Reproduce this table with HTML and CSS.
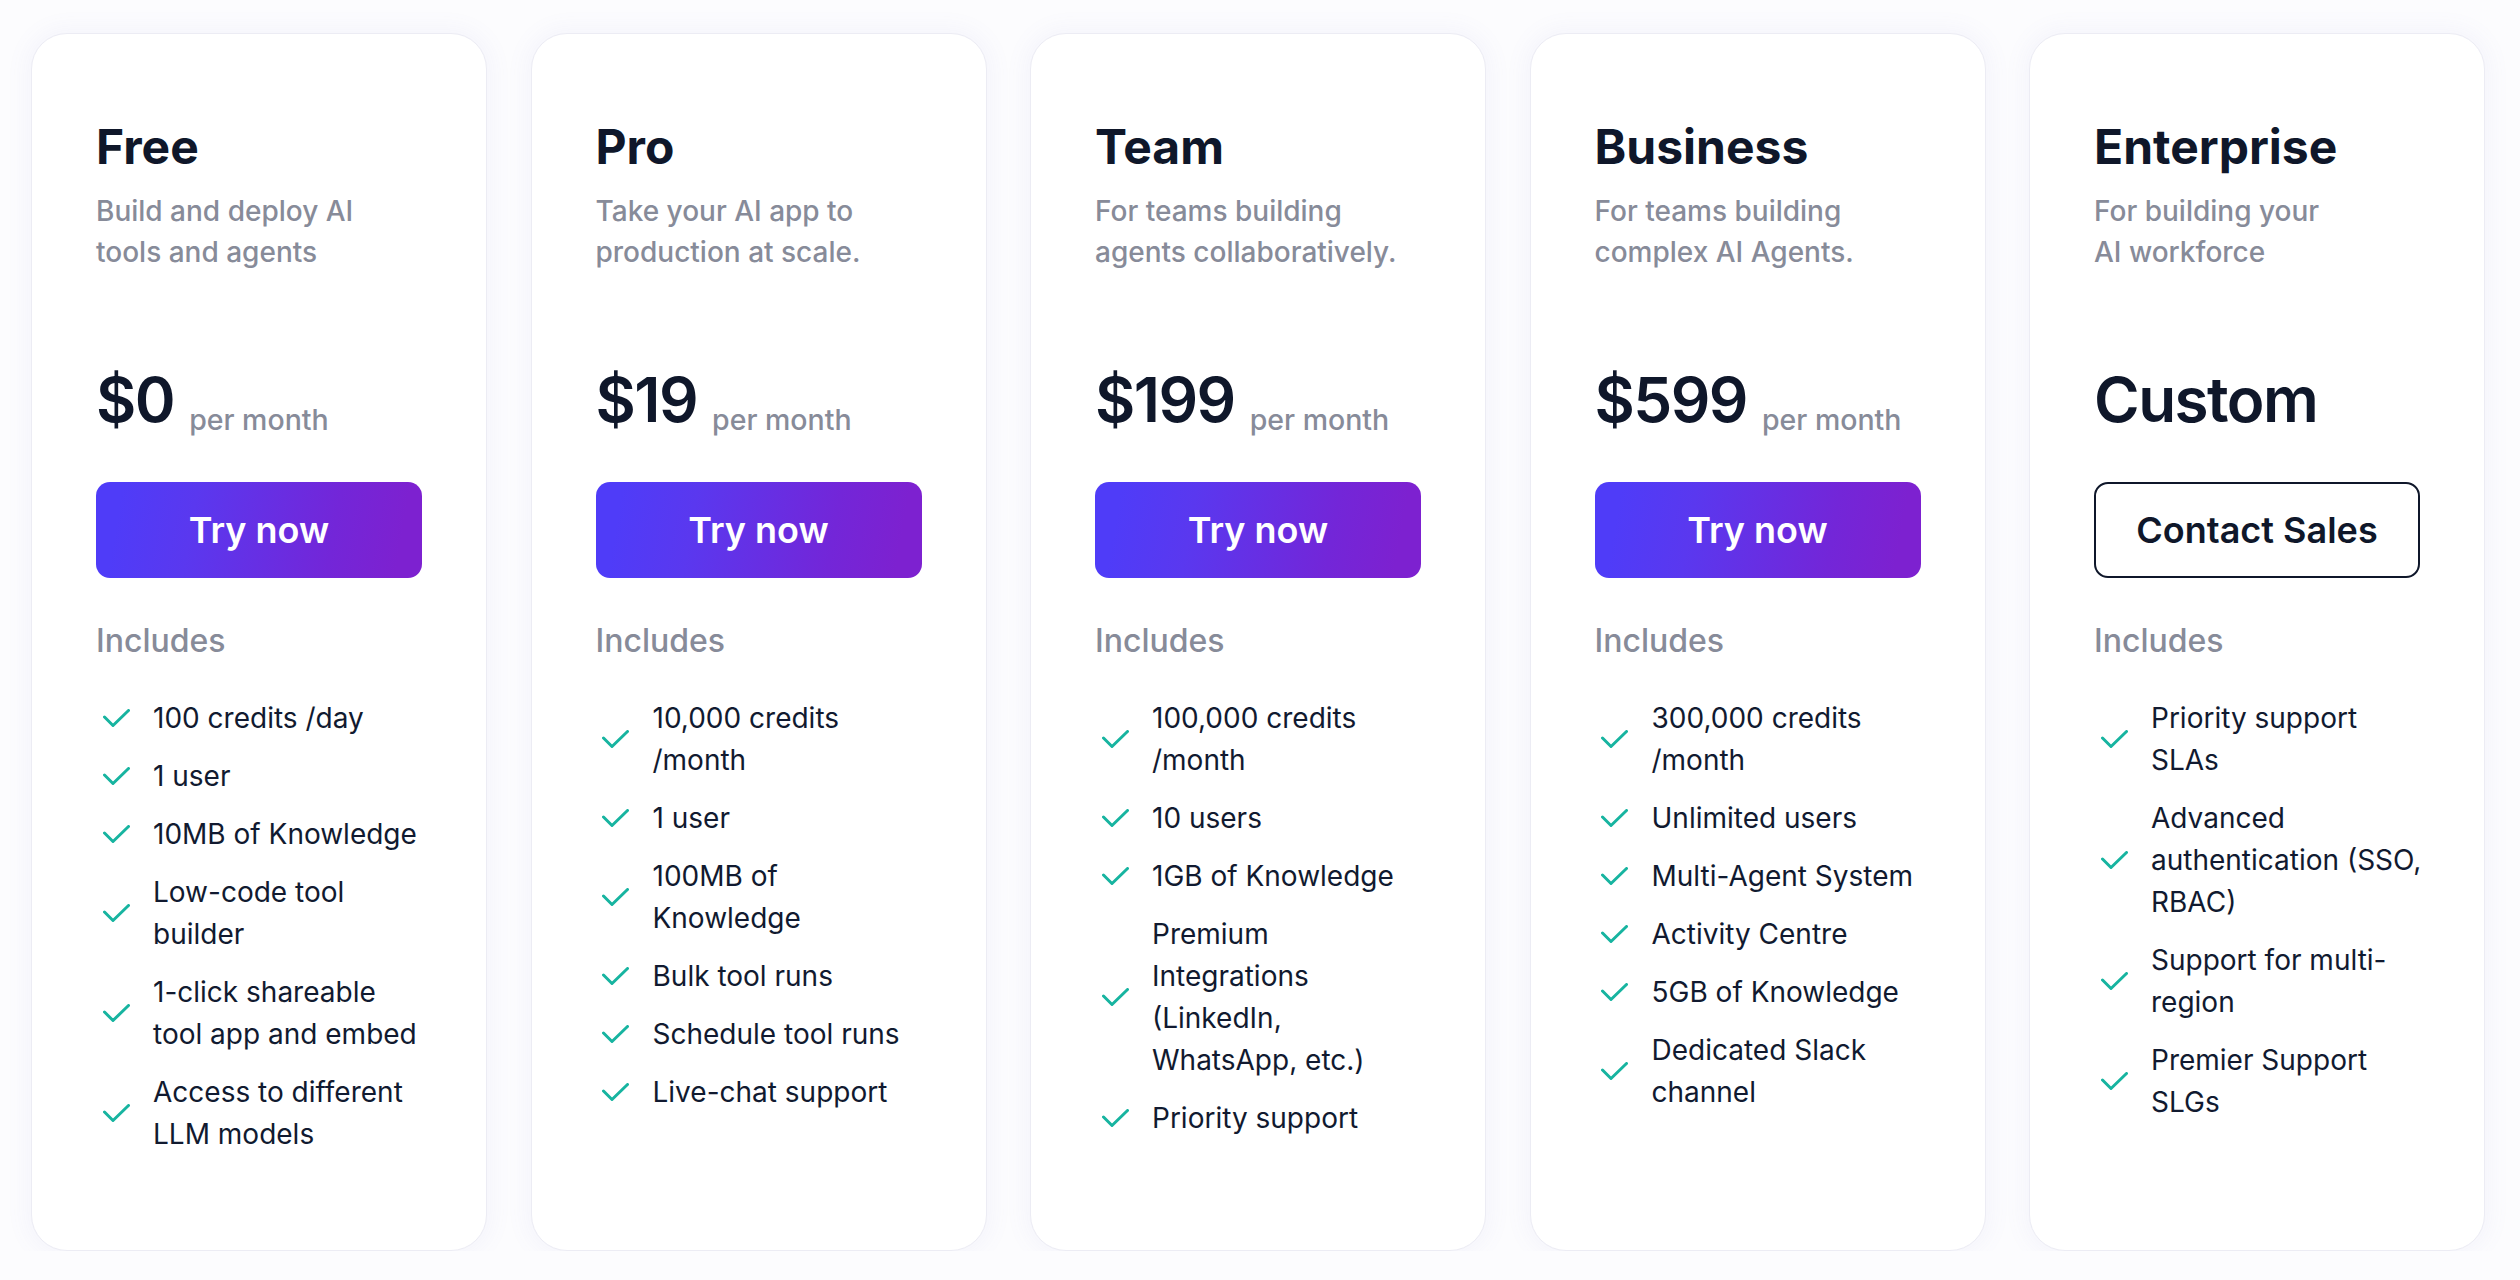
FILE: index.html
```html
<!DOCTYPE html>
<html lang="en">
<head>
<meta charset="utf-8">
<title>Pricing</title>
<link rel="stylesheet" href="styles.css">
</head>
<body>
<main class="plans">

  <section class="card">
    <h2 class="name">Free</h2>
    <p class="desc">Build and deploy AI<br>tools and agents</p>
    <div class="price"><span class="amount">$0</span><span class="per">per month</span></div>
    <a class="btn btn-primary">Try now</a>
    <div class="includes">Includes</div>
    <ul class="features">
      <li class="feature"><span class="check"><svg viewBox="0 0 27 19" width="27" height="19"><polyline points="1.5,8 10,16.5 25.5,1.5"/></svg></span><span class="ftext">100 credits /day</span></li>
      <li class="feature"><span class="check"><svg viewBox="0 0 27 19" width="27" height="19"><polyline points="1.5,8 10,16.5 25.5,1.5"/></svg></span><span class="ftext">1 user</span></li>
      <li class="feature"><span class="check"><svg viewBox="0 0 27 19" width="27" height="19"><polyline points="1.5,8 10,16.5 25.5,1.5"/></svg></span><span class="ftext">10MB of Knowledge</span></li>
      <li class="feature"><span class="check"><svg viewBox="0 0 27 19" width="27" height="19"><polyline points="1.5,8 10,16.5 25.5,1.5"/></svg></span><span class="ftext">Low-code tool builder</span></li>
      <li class="feature"><span class="check"><svg viewBox="0 0 27 19" width="27" height="19"><polyline points="1.5,8 10,16.5 25.5,1.5"/></svg></span><span class="ftext">1-click shareable tool app and embed</span></li>
      <li class="feature"><span class="check"><svg viewBox="0 0 27 19" width="27" height="19"><polyline points="1.5,8 10,16.5 25.5,1.5"/></svg></span><span class="ftext">Access to different LLM models</span></li>
    </ul>
  </section>

  <section class="card">
    <h2 class="name">Pro</h2>
    <p class="desc">Take your AI app to<br>production at scale.</p>
    <div class="price"><span class="amount">$19</span><span class="per">per month</span></div>
    <a class="btn btn-primary">Try now</a>
    <div class="includes">Includes</div>
    <ul class="features">
      <li class="feature"><span class="check"><svg viewBox="0 0 27 19" width="27" height="19"><polyline points="1.5,8 10,16.5 25.5,1.5"/></svg></span><span class="ftext">10,000 credits /month</span></li>
      <li class="feature"><span class="check"><svg viewBox="0 0 27 19" width="27" height="19"><polyline points="1.5,8 10,16.5 25.5,1.5"/></svg></span><span class="ftext">1 user</span></li>
      <li class="feature"><span class="check"><svg viewBox="0 0 27 19" width="27" height="19"><polyline points="1.5,8 10,16.5 25.5,1.5"/></svg></span><span class="ftext">100MB of Knowledge</span></li>
      <li class="feature"><span class="check"><svg viewBox="0 0 27 19" width="27" height="19"><polyline points="1.5,8 10,16.5 25.5,1.5"/></svg></span><span class="ftext">Bulk tool runs</span></li>
      <li class="feature"><span class="check"><svg viewBox="0 0 27 19" width="27" height="19"><polyline points="1.5,8 10,16.5 25.5,1.5"/></svg></span><span class="ftext">Schedule tool runs</span></li>
      <li class="feature"><span class="check"><svg viewBox="0 0 27 19" width="27" height="19"><polyline points="1.5,8 10,16.5 25.5,1.5"/></svg></span><span class="ftext">Live-chat support</span></li>
    </ul>
  </section>

  <section class="card">
    <h2 class="name">Team</h2>
    <p class="desc">For teams building<br>agents collaboratively.</p>
    <div class="price"><span class="amount">$199</span><span class="per">per month</span></div>
    <a class="btn btn-primary">Try now</a>
    <div class="includes">Includes</div>
    <ul class="features">
      <li class="feature"><span class="check"><svg viewBox="0 0 27 19" width="27" height="19"><polyline points="1.5,8 10,16.5 25.5,1.5"/></svg></span><span class="ftext">100,000 credits /month</span></li>
      <li class="feature"><span class="check"><svg viewBox="0 0 27 19" width="27" height="19"><polyline points="1.5,8 10,16.5 25.5,1.5"/></svg></span><span class="ftext">10 users</span></li>
      <li class="feature"><span class="check"><svg viewBox="0 0 27 19" width="27" height="19"><polyline points="1.5,8 10,16.5 25.5,1.5"/></svg></span><span class="ftext">1GB of Knowledge</span></li>
      <li class="feature"><span class="check"><svg viewBox="0 0 27 19" width="27" height="19"><polyline points="1.5,8 10,16.5 25.5,1.5"/></svg></span><span class="ftext">Premium Integrations (LinkedIn, WhatsApp, etc.)</span></li>
      <li class="feature"><span class="check"><svg viewBox="0 0 27 19" width="27" height="19"><polyline points="1.5,8 10,16.5 25.5,1.5"/></svg></span><span class="ftext">Priority support</span></li>
    </ul>
  </section>

  <section class="card">
    <h2 class="name">Business</h2>
    <p class="desc">For teams building<br>complex AI Agents.</p>
    <div class="price"><span class="amount">$599</span><span class="per">per month</span></div>
    <a class="btn btn-primary">Try now</a>
    <div class="includes">Includes</div>
    <ul class="features">
      <li class="feature"><span class="check"><svg viewBox="0 0 27 19" width="27" height="19"><polyline points="1.5,8 10,16.5 25.5,1.5"/></svg></span><span class="ftext">300,000 credits /month</span></li>
      <li class="feature"><span class="check"><svg viewBox="0 0 27 19" width="27" height="19"><polyline points="1.5,8 10,16.5 25.5,1.5"/></svg></span><span class="ftext">Unlimited users</span></li>
      <li class="feature"><span class="check"><svg viewBox="0 0 27 19" width="27" height="19"><polyline points="1.5,8 10,16.5 25.5,1.5"/></svg></span><span class="ftext">Multi-Agent System</span></li>
      <li class="feature"><span class="check"><svg viewBox="0 0 27 19" width="27" height="19"><polyline points="1.5,8 10,16.5 25.5,1.5"/></svg></span><span class="ftext">Activity Centre</span></li>
      <li class="feature"><span class="check"><svg viewBox="0 0 27 19" width="27" height="19"><polyline points="1.5,8 10,16.5 25.5,1.5"/></svg></span><span class="ftext">5GB of Knowledge</span></li>
      <li class="feature"><span class="check"><svg viewBox="0 0 27 19" width="27" height="19"><polyline points="1.5,8 10,16.5 25.5,1.5"/></svg></span><span class="ftext">Dedicated Slack channel</span></li>
    </ul>
  </section>

  <section class="card">
    <h2 class="name">Enterprise</h2>
    <p class="desc">For building your<br>AI workforce</p>
    <div class="price"><span class="amount">Custom</span></div>
    <a class="btn btn-outline">Contact Sales</a>
    <div class="includes">Includes</div>
    <ul class="features">
      <li class="feature"><span class="check"><svg viewBox="0 0 27 19" width="27" height="19"><polyline points="1.5,8 10,16.5 25.5,1.5"/></svg></span><span class="ftext">Priority support SLAs</span></li>
      <li class="feature"><span class="check"><svg viewBox="0 0 27 19" width="27" height="19"><polyline points="1.5,8 10,16.5 25.5,1.5"/></svg></span><span class="ftext">Advanced authentication (SSO, RBAC)</span></li>
      <li class="feature"><span class="check"><svg viewBox="0 0 27 19" width="27" height="19"><polyline points="1.5,8 10,16.5 25.5,1.5"/></svg></span><span class="ftext">Support for multi-region</span></li>
      <li class="feature"><span class="check"><svg viewBox="0 0 27 19" width="27" height="19"><polyline points="1.5,8 10,16.5 25.5,1.5"/></svg></span><span class="ftext">Premier Support SLGs</span></li>
    </ul>
  </section>

</main>
</body>
</html>
```
FILE: styles.css
```css
html, body {
  margin: 0;
  padding: 0;
}

body {
  background: #fcfcfe;
  font-family: Inter, "Noto Sans", "Liberation Sans", sans-serif;
  color: #0f172a;
}

.plans {
  display: grid;
  grid-template-columns: repeat(5, 456px);
  column-gap: 43.5px;
  padding: 33px 0 0 31px;
  align-items: start;
}

.card {
  box-sizing: border-box;
  min-height: 1218px;
  background: #ffffff;
  border: 1px solid #ececf4;
  border-radius: 36px;
  padding: 84px 64px 64px;
  box-shadow: 0 0 22px 5px rgba(120, 120, 200, 0.06);
  display: flex;
  flex-direction: column;
}

.name {
  margin: 0;
  font-size: 48px;
  line-height: 58px;
  font-weight: 700;
  color: #0f172a;
}

.desc {
  margin: 15px 0 0;
  font-size: 28px;
  line-height: 41px;
  font-weight: 500;
  color: #878b99;
}

.price {
  margin-top: 89px;
  font-size: 62px;
  line-height: 75px;
  font-weight: 600;
  color: #0f172a;
  white-space: nowrap;
}

.amount {
  letter-spacing: -0.025em;
}

.per {
  margin-left: 15px;
  font-size: 28.5px;
  line-height: 1;
  font-weight: 500;
  color: #878b99;
  vertical-align: -8px;
}

.btn {
  box-sizing: border-box;
  margin-top: 45px;
  height: 96px;
  border-radius: 14px;
  display: flex;
  align-items: center;
  justify-content: center;
  font-size: 36px;
  font-weight: 600;
  text-decoration: none;
  cursor: pointer;
}

.btn-primary {
  color: #ffffff;
  background: linear-gradient(100deg, #4f3cf8 8%, #5a38ef 30%, #7326d8 72%, #7d21d0 92%);
}

.btn-outline {
  color: #0f172a;
  background: #ffffff;
  border: 2px solid #0f172a;
}

.includes {
  margin-top: 45px;
  font-size: 32px;
  line-height: 36px;
  font-weight: 500;
  color: #878b99;
}

.features {
  list-style: none;
  margin: 38px -6px 0 0;
  padding: 0;
  display: flex;
  flex-direction: column;
  gap: 16px;
}

.feature {
  display: flex;
  align-items: center;
  gap: 17px;
  font-size: 28px;
  line-height: 42px;
  font-weight: 400;
  color: #111a30;
}

.check {
  flex: 0 0 40px;
  display: flex;
  justify-content: center;
  align-items: center;
}

.check svg {
  display: block;
  fill: none;
  stroke: #17b4a0;
  stroke-width: 3;
  stroke-linecap: round;
  stroke-linejoin: round;
}

.ftext {
  flex: 1 1 auto;
  min-width: 0;
}
```
